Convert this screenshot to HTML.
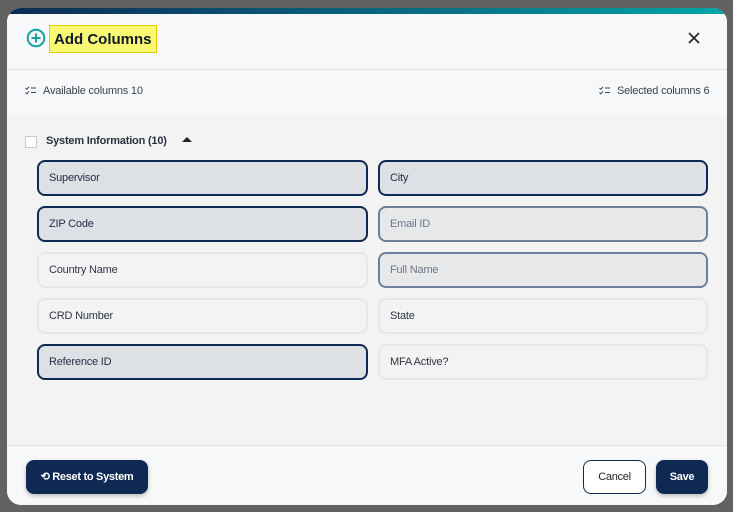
<!DOCTYPE html>
<html><head><style>
*{box-sizing:border-box;margin:0;padding:0}
body{width:733px;height:512px;background:#616262;font-family:"Liberation Sans",sans-serif;position:relative;overflow:hidden}
.m{position:absolute;left:7px;top:8px;width:720px;height:497px;border-radius:14px;overflow:hidden;background:#f7f8f9}
.bar{position:absolute;left:0;top:0;width:100%;height:6px;background:linear-gradient(90deg,#0d2b52,#0a6f86 60%,#03a6a6)}
.hd{position:absolute;left:0;top:6px;width:100%;height:56px;border-bottom:1px solid #e1e3e6;background:#f7f8f9}
.title{position:absolute;left:42px;top:11px;height:28px;background:#f9f871;border:1px solid #e8c800;padding:5px 4px;font-weight:bold;font-size:15px;color:#0e1a2a}
.sub{position:absolute;left:0;top:62px;width:100%;height:45px;font-size:11px;color:#3b4350;letter-spacing:-0.2px}
.body{position:absolute;left:0;top:107px;width:100%;height:330px;background:#f3f3f3}
.ft{position:absolute;left:0;top:437px;width:100%;height:60px;border-top:1px solid #e1e3e6;background:#f7f8f9}
.c{position:absolute;width:331px;height:36px;border-radius:8px;font-size:11px;padding-left:10px;line-height:32px;letter-spacing:-0.2px;color:#1f2d44}
.s{background:#dde0e5;border:2px solid #0f2a52}
.g{background:#e7e8ea;border:2px solid #6e7f98;color:#6c7687}
.u{background:#f3f3f3;border:2px solid #e6e7ea;color:#2e3644}
.btn{position:absolute;height:34px;border-radius:8px;font-size:11px;font-weight:bold;line-height:34px;text-align:center;letter-spacing:-0.3px}
</style></head><body>
<div class="m">
<div class="bar"></div>
<div class="hd">
<svg style="position:absolute;left:19px;top:14px" width="20" height="20" viewBox="0 0 20 20"><circle cx="10" cy="10" r="8.3" fill="none" stroke="#17a0a0" stroke-width="2"/><path d="M10 5.5v9M5.5 10h9" stroke="#17a0a0" stroke-width="2"/></svg>
<div class="title">Add Columns</div>
<svg style="position:absolute;left:681px;top:18px" width="12" height="12" viewBox="0 0 12 12"><path d="M1 1l10 10M11 1L1 11" stroke="#222" stroke-width="1.6"/></svg>
</div>
<div class="sub">
<svg style="position:absolute;left:18px;top:16px" width="11" height="9" viewBox="0 0 11 9"><path d="M0.5 2l1.3 1.3L4 0.8M0.5 6.5l1.3 1.3L4 5.3M6 2h5M6 6.5h5" stroke="#3b4350" stroke-width="1" fill="none"/></svg><span style="position:absolute;left:36px;top:15px">Available columns 10</span>
<svg style="position:absolute;left:592px;top:16px" width="11" height="9" viewBox="0 0 11 9"><path d="M0.5 2l1.3 1.3L4 0.8M0.5 6.5l1.3 1.3L4 5.3M6 2h5M6 6.5h5" stroke="#3b4350" stroke-width="1" fill="none"/></svg><span style="position:absolute;left:610px;top:15px">Selected columns 6</span>
</div>
<div class="body">
<div style="position:absolute;left:18px;top:21px;width:12px;height:12px;border:1.5px solid #c8cacd;background:#fff"></div>
<div style="position:absolute;left:39px;top:20px;font-size:11px;font-weight:bold;color:#2b3240;letter-spacing:-0.2px">System Information (10)</div>
<div style="position:absolute;left:175px;top:22px;width:0;height:0;border-left:5px solid transparent;border-right:5px solid transparent;border-bottom:5px solid #222"></div>
</div>
<div class="c s" style="left:30px;top:152px">Supervisor</div>
<div class="c s" style="left:371px;top:152px;width:330px">City</div>
<div class="c s" style="left:30px;top:198px">ZIP Code</div>
<div class="c g" style="left:371px;top:198px;width:330px">Email ID</div>
<div class="c u" style="left:30px;top:244px">Country Name</div>
<div class="c g" style="left:371px;top:244px;width:330px">Full Name</div>
<div class="c u" style="left:30px;top:290px">CRD Number</div>
<div class="c u" style="left:371px;top:290px;width:330px">State</div>
<div class="c s" style="left:30px;top:336px">Reference ID</div>
<div class="c u" style="left:371px;top:336px;width:330px">MFA Active?</div>
<div class="ft">
<div class="btn" style="left:19px;top:14px;width:122px;background:#0f2a52;color:#fff;box-shadow:0 2px 4px rgba(0,0,0,.25)">⟲ Reset to System</div>
<div class="btn" style="left:576px;top:14px;width:63px;background:#fff;border:1px solid #0f2a52;color:#222;font-weight:normal;line-height:32px">Cancel</div>
<div class="btn" style="left:649px;top:14px;width:52px;background:#0f2a52;color:#fff;box-shadow:0 2px 4px rgba(0,0,0,.25)">Save</div>
</div>
</div>
</body></html>
